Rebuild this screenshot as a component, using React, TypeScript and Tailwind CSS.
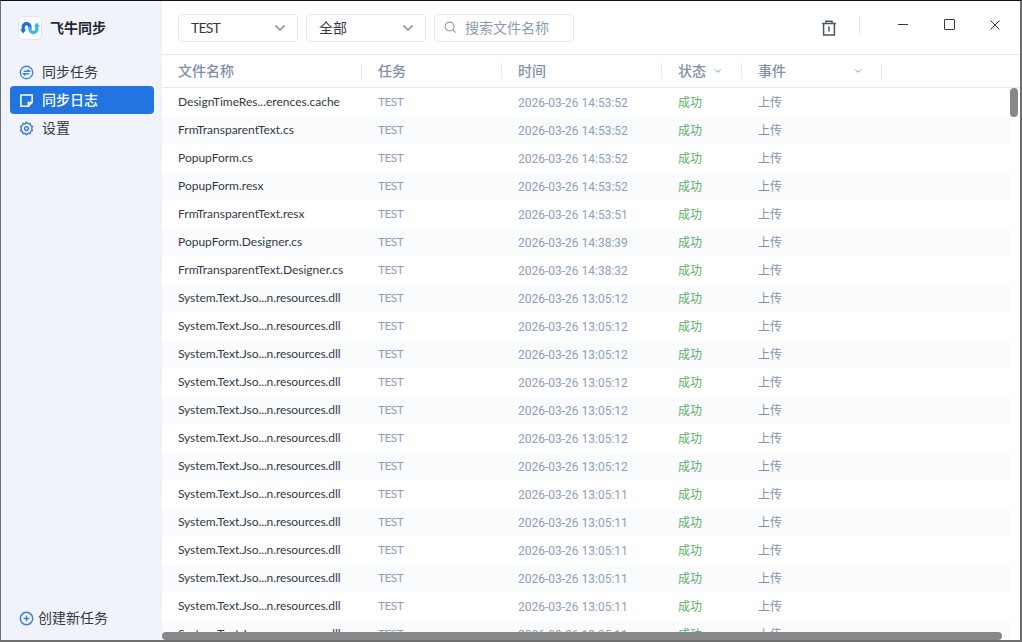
import React from "react";

const sys = "System.Text.Jso...n.resources.dll";
const rows: [string, string][] = [
  ["DesignTimeRes...erences.cache", "14:53:52"],
  ["FrmTransparentText.cs", "14:53:52"],
  ["PopupForm.cs", "14:53:52"],
  ["PopupForm.resx", "14:53:52"],
  ["FrmTransparentText.resx", "14:53:51"],
  ["PopupForm.Designer.cs", "14:38:39"],
  ["FrmTransparentText.Designer.cs", "14:38:32"],
  [sys, "13:05:12"],
  [sys, "13:05:12"],
  [sys, "13:05:12"],
  [sys, "13:05:12"],
  [sys, "13:05:12"],
  [sys, "13:05:12"],
  [sys, "13:05:12"],
  [sys, "13:05:11"],
  [sys, "13:05:11"],
  [sys, "13:05:11"],
  [sys, "13:05:11"],
  [sys, "13:05:11"],
  [sys, "13:05:11"],
];

function Chevron({ className }: { className: string }) {
  return (
    <svg viewBox="0 0 12 8" fill="none" stroke="currentColor" strokeWidth="1.5" className={className}>
      <path d="M1.5 1.5 6 6l4.5-4.5" />
    </svg>
  );
}

function Select({ label, width, tight }: { label: string; width: string; tight?: boolean }) {
  return (
    <div className={`flex h-[28px] items-center justify-between rounded-[4px] border border-[#e3e8ef] pl-[12px] pr-[11px] text-[14px] text-[#333a45] ${width}`}>
      <span className={`font-['Lato','Noto_Sans_CJK_SC',sans-serif] ${tight ? "tracking-[-0.8px]" : ""}`}>{label}</span>
      <Chevron className="h-[8px] w-[12px] text-[#76879f]" />
    </div>
  );
}

function Logo() {
  return (
    <div className="flex h-[24px] w-[24px] items-center justify-center rounded-[5px] border border-[#dfe4fa] bg-white">
      <svg viewBox="0 0 20 20" fill="none" className="h-[20px] w-[20px]">
        <path d="M3.2 12.5V9a3.4 3.4 0 0 1 6.8 0v2" stroke="#1c6fe3" strokeWidth="3.2" />
        <path d="M10 9v2.2a3.4 3.4 0 0 0 6.8 0V7.5" stroke="#3cb4f2" strokeWidth="3.2" />
        <path d="M0.2 11.4 3.2 15.6 6.2 11.4Z" fill="#1c6fe3" />
        <path d="M13.8 8.4 16.8 4.4 19.8 8.4Z" fill="#3cb4f2" />
      </svg>
    </div>
  );
}

function NavItem({ icon, label, active }: { icon: React.ReactNode; label: string; active?: boolean }) {
  return (
    <div className={`flex h-[28px] items-center gap-[8px] rounded-[4px] pl-[9px] text-[14px] ${active ? "bg-[#2274e0] font-medium text-white" : "text-[#333a45]"}`}>
      {icon}
      <span>{label}</span>
    </div>
  );
}

function HeaderCell({ label, width, chevron }: { label: string; width: string; chevron?: boolean }) {
  return (
    <div className={`flex h-[16px] shrink-0 items-center justify-between border-r border-[#e6eaf0] pr-[19px] ${width}`}>
      <span className="pt-[2px] text-[14px] font-medium text-[#7f90a9]">{label}</span>
      {chevron && <Chevron className="h-[6px] w-[8px] text-[#8b9ab0]" />}
    </div>
  );
}

export default function App() {
  return (
    <div
      className="relative flex h-[642px] w-[1022px] overflow-hidden border-b-2 border-l border-r-2 border-t border-b-[#6e6e6e] border-l-[#6e6e6e] border-r-[#6e6e6e] border-t-[#111] bg-white"
      style={{ fontFamily: 'Roboto, "Noto Sans CJK SC", "Noto Sans", sans-serif' }}
    >
      <aside className="flex w-[161px] shrink-0 flex-col bg-[#f0f4fa] pl-[9px] pr-[8px]">
        <div className="flex h-[54px] items-center gap-[8px] pl-[8px]">
          <Logo />
          <span className="text-[14px] font-bold text-[#1f2733]">飞牛同步</span>
        </div>
        <nav className="mt-[3px] flex flex-col">
          <NavItem
            label="同步任务"
            icon={
              <svg viewBox="0 0 16 16" fill="none" stroke="#3f80dc" strokeWidth="1.5" className="h-[15px] w-[15px]">
                <circle cx="8" cy="8" r="6.6" />
                <path d="M5 6.6h6L9.2 4.8M11 9.4H5L6.8 11.2" />
              </svg>
            }
          />
          <NavItem
            active
            label="同步日志"
            icon={
              <svg viewBox="0 0 16 16" fill="none" stroke="#fff" strokeWidth="1.6" className="h-[15px] w-[15px]">
                <path d="M2 2h12v8l-4 4H2zM14 10h-4v4" />
              </svg>
            }
          />
          <NavItem
            label="设置"
            icon={
              <svg viewBox="0 0 16 16" fill="none" stroke="#3f80dc" strokeWidth="1.6" className="h-[15px] w-[15px]">
                <path d="M8 1.3l1.6 1.5 2.2-.2.6 2.1 1.9 1.1-.8 2.1.8 2.1-1.9 1.1-.6 2.1-2.2-.2L8 14.7l-1.6-1.5-2.2.2-.6-2.1-1.9-1.1.8-2.1-.8-2.1 1.9-1.1.6-2.1 2.2.2z" />
                <circle cx="8" cy="8" r="2" />
              </svg>
            }
          />
        </nav>
        <div className="mt-auto mb-[11px] flex items-center gap-[4px] pl-[9px] text-[14px] text-[#333a45]">
          <svg viewBox="0 0 16 16" fill="none" stroke="#3f80dc" strokeWidth="1.6" className="h-[15px] w-[15px]">
            <circle cx="8" cy="8" r="6.6" />
            <path d="M8 5v6M5 8h6" />
          </svg>
          <span>创建新任务</span>
        </div>
      </aside>

      <main className="flex min-w-0 flex-1 flex-col">
        <header className="flex h-[54px] shrink-0 items-center border-b border-[#e3e8ef] pl-[16px]">
          <Select label="TEST" width="w-[120px]" tight />
          <div className="w-[8px]" />
          <Select label="全部" width="w-[120px]" />
          <div className="ml-[8px] flex h-[28px] w-[140px] items-center gap-[8px] rounded-[4px] border border-[#e3e8ef] pl-[9px] text-[14px] text-[#8d9bb0]">
            <svg viewBox="0 0 14 14" fill="none" stroke="#8d9bb0" strokeWidth="1.2" className="h-[13px] w-[13px]">
              <circle cx="6" cy="6" r="4.8" />
              <path d="m9.6 9.6 3 3" />
            </svg>
            <span className="pt-[2px]">搜索文件名称</span>
          </div>
          <div className="ml-auto flex items-center">
            <svg viewBox="0 0 16 16" fill="none" stroke="#4b5563" strokeWidth="1.5" className="h-[16px] w-[16px]">
              <path d="M1 3.5h14M5 3V1.2h6V3M2.6 3.5V15h10.8V3.5M8 6.5v5" />
            </svg>
            <div className="mb-[4px] ml-[22px] h-[20px] w-px bg-[#e6eaf0]" />
            <div className="mb-[6px] ml-[38px] flex items-center pr-[20px]">
              <div className="h-px w-[10px] bg-[#333a45]" />
              <div className="ml-[36px] h-[11px] w-[11px] rounded-[1px] border border-[#333a45]" />
              <svg viewBox="0 0 10 10" fill="none" stroke="#333a45" strokeWidth="1" className="ml-[35px] h-[10px] w-[10px]">
                <path d="m.5.5 9 9M9.5.5l-9 9" />
              </svg>
            </div>
          </div>
        </header>

        <div className="flex h-[33px] shrink-0 items-center border-b border-[#e3e8ef] pb-[1px] pl-[16px]">
          <HeaderCell label="文件名称" width="w-[184px]" />
          <div className="w-[16px]" />
          <HeaderCell label="任务" width="w-[124px]" />
          <div className="w-[16px]" />
          <HeaderCell label="时间" width="w-[144px]" />
          <div className="w-[16px]" />
          <div className="flex h-[16px] w-[64px] shrink-0 items-center justify-between border-r border-[#e6eaf0] pr-[19px]">
            <span className="pt-[2px] text-[14px] font-medium text-[#7f90a9]">状态</span>
            <Chevron className="h-[6px] w-[8px] text-[#8b9ab0]" />
          </div>
          <div className="w-[16px]" />
          <HeaderCell label="事件" width="w-[124px]" chevron />
        </div>

        <div className="w-[848px] min-h-0 flex-1 overflow-hidden">
          {rows.map(([name, time], i) => (
            <div key={i} className={`flex h-[28px] items-center pl-[16px] text-[12px] ${i % 2 ? "bg-[#f9fbfd]" : "bg-white"}`}>
              <span className={`w-[200px] shrink-0 font-['Lato'] text-[#333a45] ${name === sys ? "tracking-[-0.09px]" : ""}`}>{name}</span>
              <span className="w-[140px] shrink-0 font-['Lato'] tracking-[-0.6px] text-[#8fa0b8]">TEST</span>
              <span className="w-[160px] shrink-0 pt-[2px] text-[#8fa0b8]">2026-03-26 {time}</span>
              <span className="w-[80px] shrink-0 pt-[2px] text-[#5fae6a]">成功</span>
              <span className="pt-[2px] text-[#8493a8]">上传</span>
            </div>
          ))}
        </div>
      </main>

      <div className="absolute left-[1009px] top-[87px] h-[29px] w-[8px] rounded-[4px] bg-[#888]" />
      <div className="absolute bottom-0 left-[161px] h-[8px] w-[840px] rounded-[4px] bg-[#888]" />
    </div>
  );
}
